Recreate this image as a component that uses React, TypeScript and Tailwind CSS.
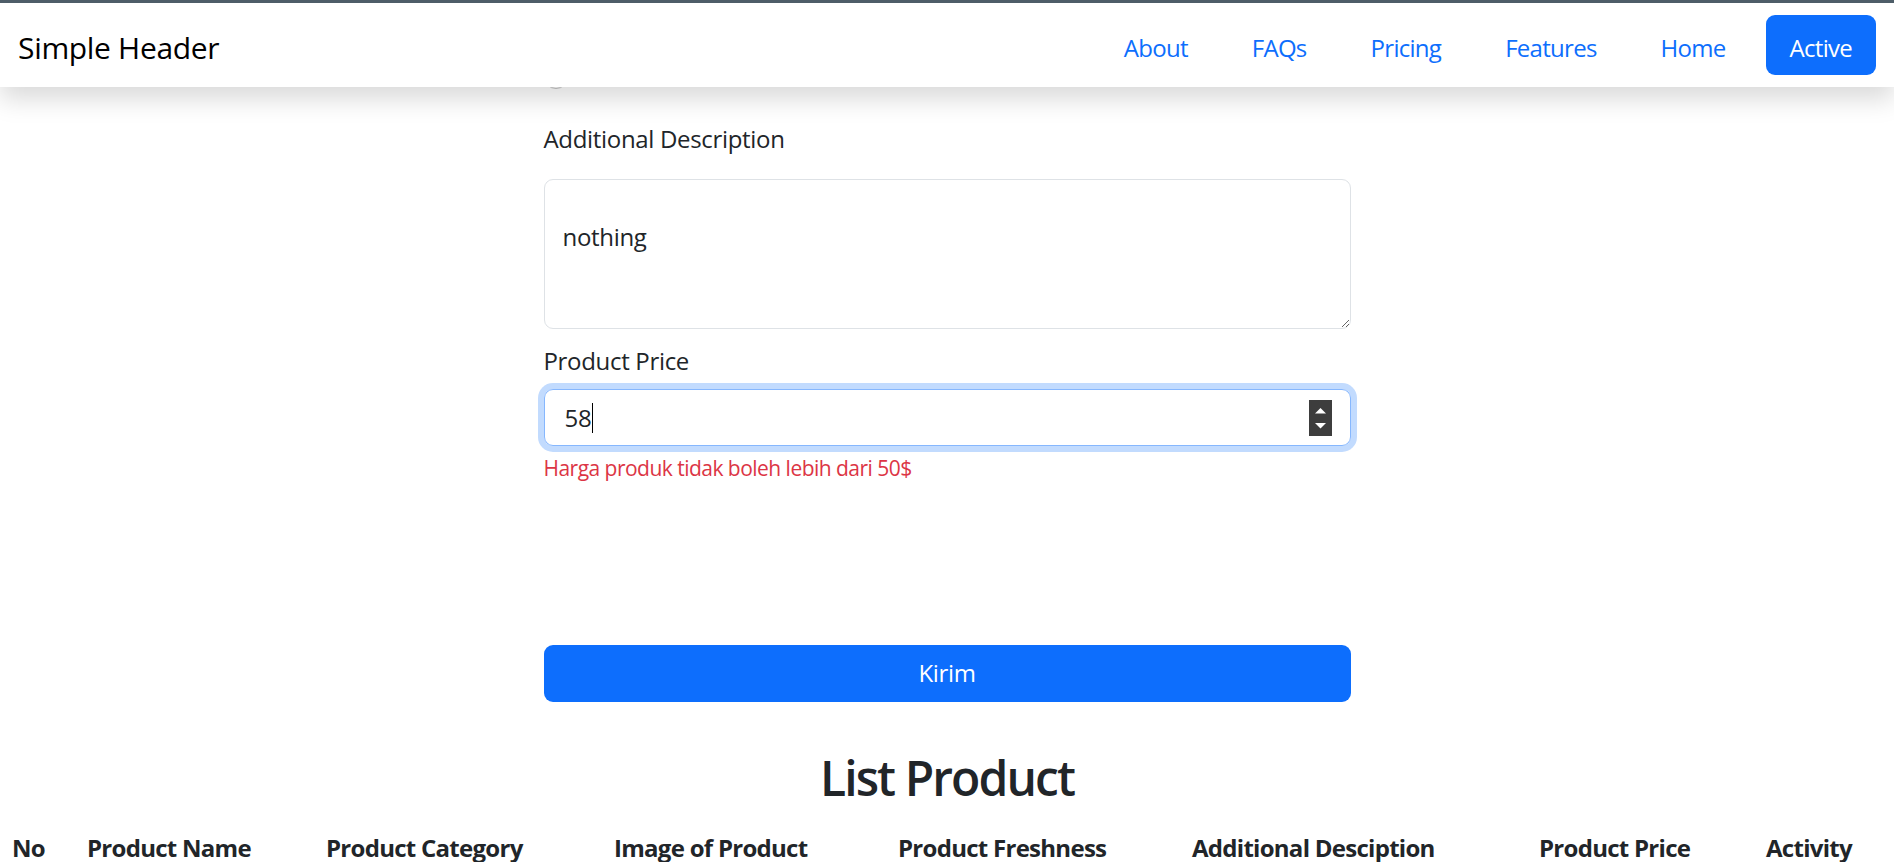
const navLinks = ["About", "FAQs", "Pricing", "Features", "Home"];

const columns = [
  { label: "No", width: "w-[75px]" },
  { label: "Product Name", width: "w-[239px]" },
  { label: "Product Category", width: "w-[288px]" },
  { label: "Image of Product", width: "w-[284px]" },
  { label: "Product Freshness", width: "w-[294px]" },
  { label: "Additional Desciption", width: "w-[347px]" },
  { label: "Product Price", width: "w-[227px]" },
  { label: "Activity", width: "w-[140px]" },
];

function Header() {
  return (
    <header className="fixed inset-x-0 top-0 z-10 shadow-[0_12px_24px_rgba(0,0,0,0.15)]">
      <div className="h-[3px] bg-[#4e5d68]" />
      <nav className="flex h-[84px] items-center justify-between bg-white px-[18px]">
        <a href="#" className="pt-1 text-[30px] leading-[45px] text-black">
          Simple Header
        </a>
        <ul className="flex gap-4 tracking-[-0.045em]">
          {navLinks.map((link) => (
            <li key={link}>
              <a href="#" className="block rounded-[9px] px-6 pb-[9px] pt-[15px] text-[24px] leading-9 text-[#0d6efd]">
                {link}
              </a>
            </li>
          ))}
          <li>
            <a href="#" className="block rounded-[9px] bg-[#0d6efd] px-6 pb-[9px] pt-[15px] text-[24px] leading-9 text-white">
              Active
            </a>
          </li>
        </ul>
      </nav>
    </header>
  );
}

function PriceInput() {
  return (
    <div className="mt-[10px] flex h-[57px] items-center rounded-[9px] border border-[#86b7fe] pl-[20px] pr-[18px] shadow-[0_0_0_6px_rgba(13,110,253,0.25)]">
      <span className="text-[24px] leading-9">58</span>
      <span className="ml-[1px] h-[30px] w-[1px] bg-black" />
      <svg className="ml-auto" width="23" height="36" viewBox="0 0 23 36">
        <rect width="23" height="36" fill="#3d3d3d" />
        <path d="M6 13.5 L11.5 8 L17 13.5 Z" fill="#fff" />
        <path d="M6 23 L11.5 28.5 L17 23 Z" fill="#fff" />
      </svg>
    </div>
  );
}

export default function App() {
  return (
    <div className="relative h-screen overflow-hidden bg-white font-['Open_Sans',sans-serif] tracking-[-0.02em] text-[#212529]">
      <Header />
      <main className="pt-[65px]">
        <form className="mx-auto w-[807px]">
          <div className="h-6 w-6 rounded-full border border-[#c4c4c4]" />

          <label className="mt-[32px] block text-[24px] leading-9">Additional Description</label>
          <textarea
            defaultValue="nothing"
            className="mt-[22px] block h-[150px] w-full rounded-[9px] border border-[#dee2e6] px-[18px] pb-[15px] pt-[39px] text-[24px] leading-9 outline-none"
          />

          <label className="mt-[14px] block text-[24px] leading-9">Product Price</label>
          <PriceInput />
          <p className="mt-[7px] text-[21px] leading-[31.5px] tracking-[-0.025em] text-[#dc3545]">
            Harga produk tidak boleh lebih dari 50$
          </p>

          <button type="button" className="mt-[160px] block h-[57px] w-full rounded-[9px] bg-[#0d6efd] text-[24px] text-white">
            Kirim
          </button>
        </form>

        <h2 className="mt-[47px] text-center text-[48px] font-semibold leading-[1.2] tracking-[-0.04em]">
          List Product
        </h2>

        <table className="mt-3 w-full table-fixed border-collapse">
          <colgroup>
            {columns.map((col) => (
              <col key={col.label} className={col.width} />
            ))}
          </colgroup>
          <thead>
            <tr>
              {columns.map((col) => (
                <th
                  key={col.label}
                  className="whitespace-nowrap px-3 pb-2 pt-4 text-left text-[24px] font-bold leading-7 tracking-[-0.03em]"
                >
                  {col.label}
                </th>
              ))}
            </tr>
          </thead>
        </table>
      </main>
    </div>
  );
}
